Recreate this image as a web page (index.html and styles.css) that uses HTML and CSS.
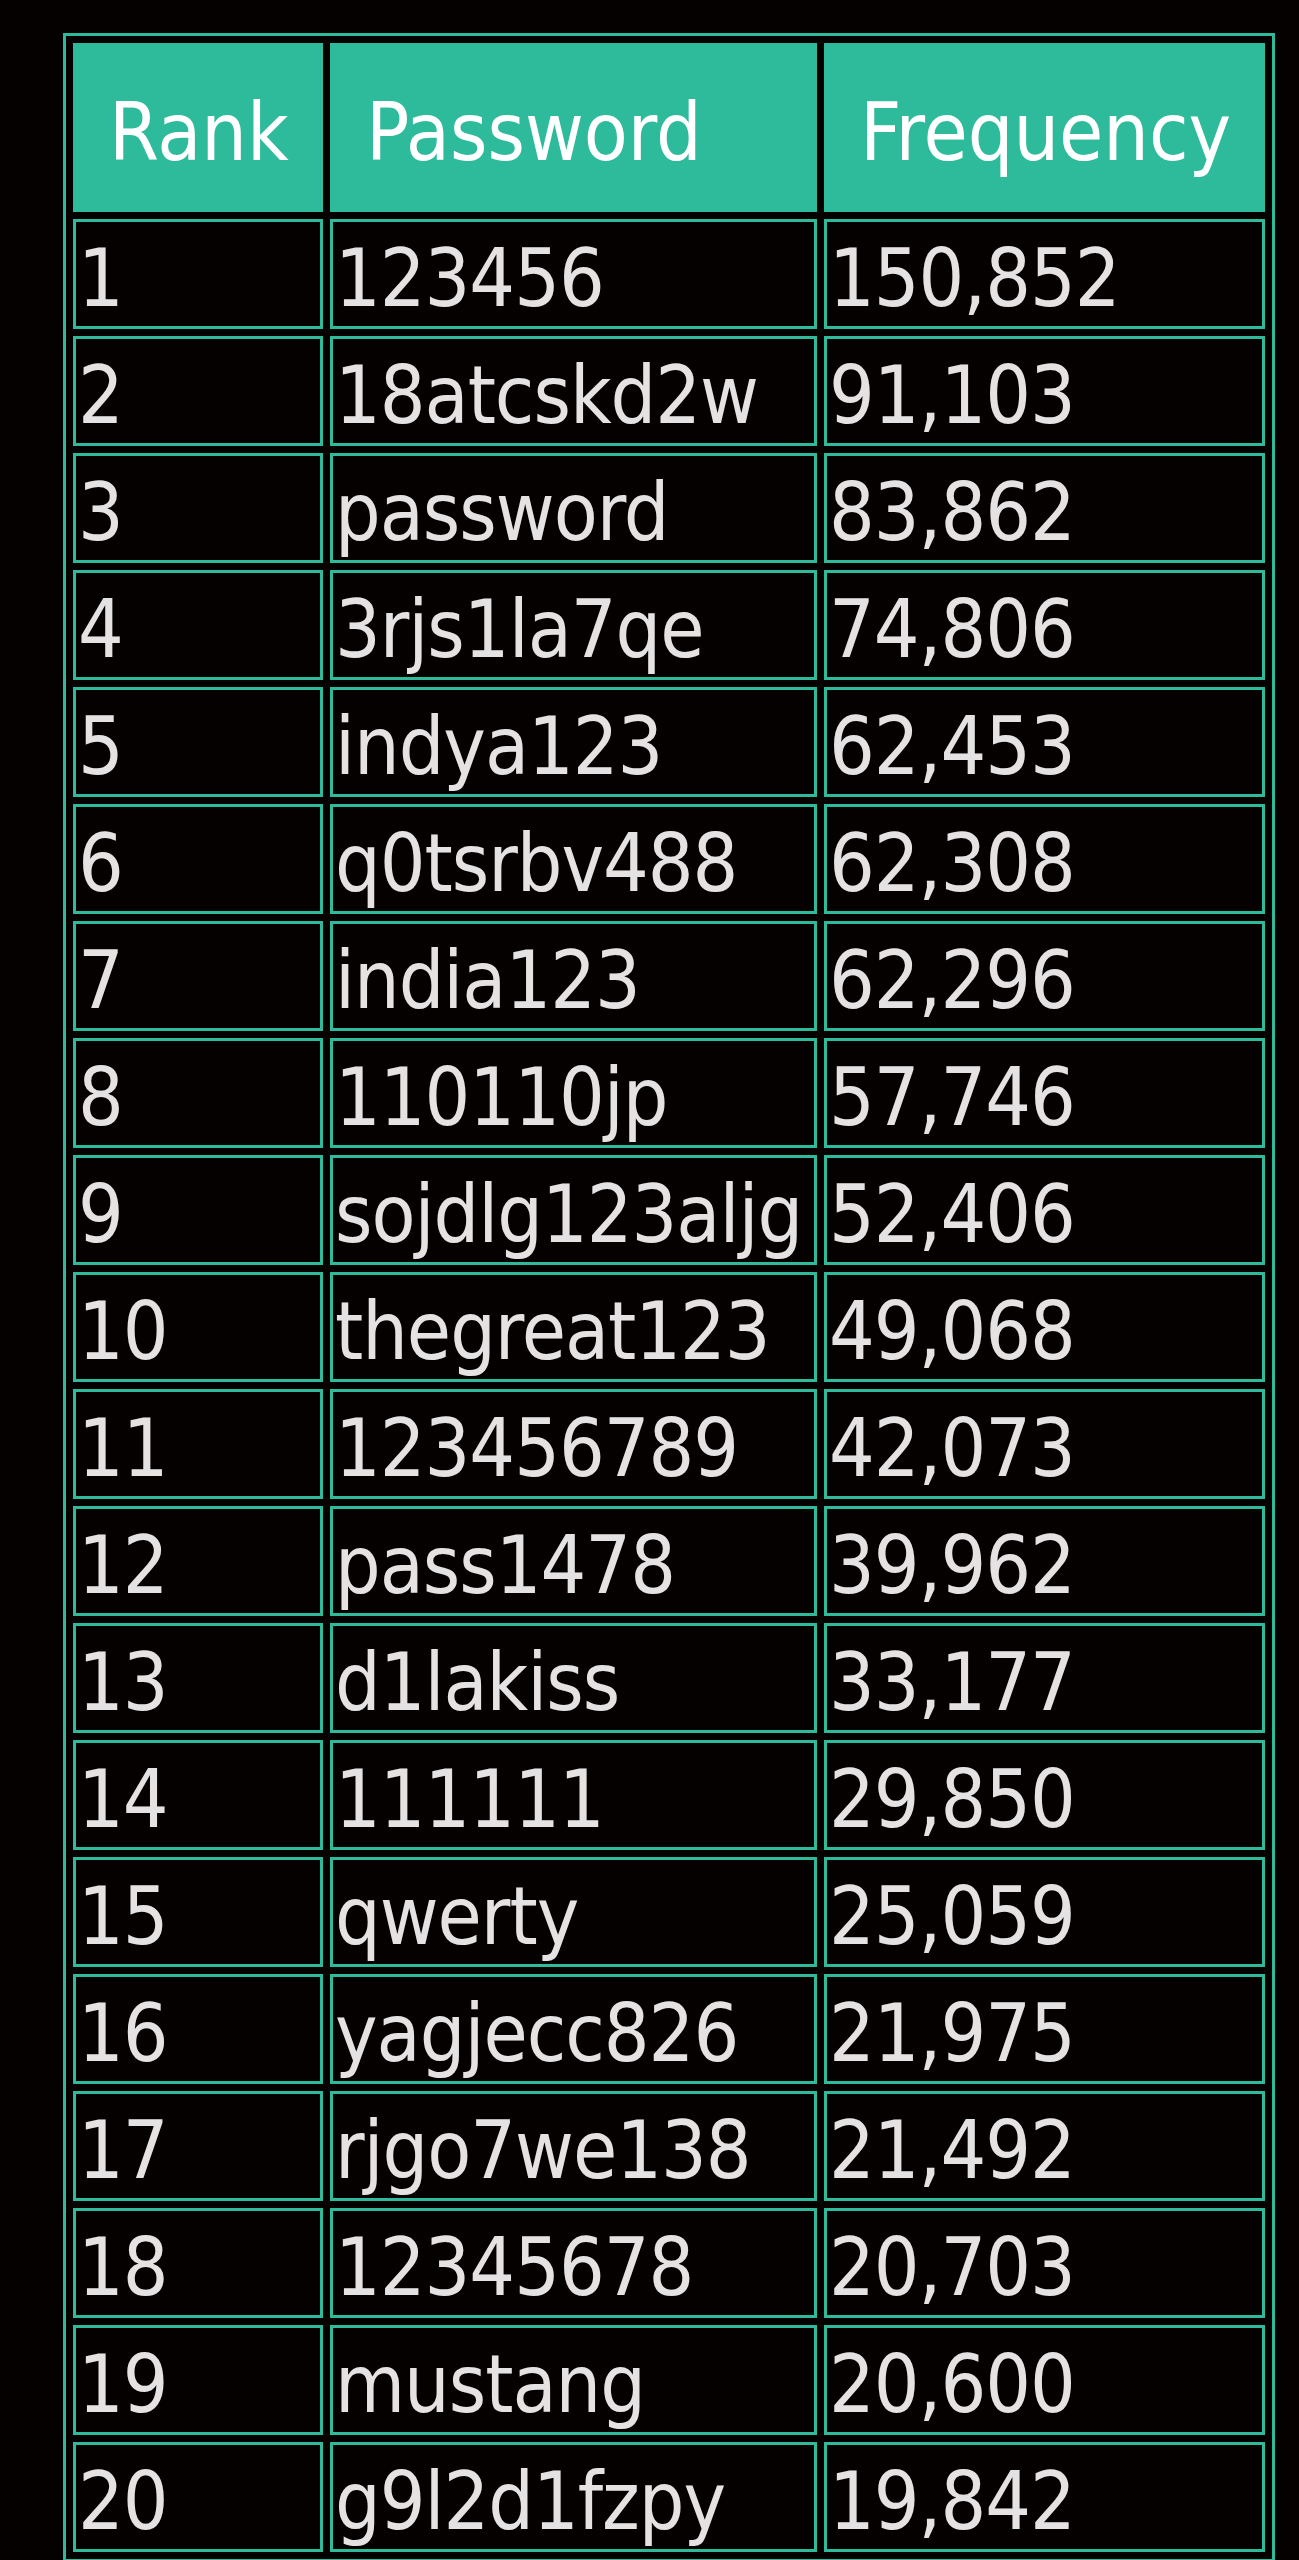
FILE: index.html
```html
<!DOCTYPE html>
<html lang="en">
<head>
    <meta charset="UTF-8">
    <meta name="viewport" content="width=device-width, initial-scale=1.0">
    <title>Most common passwords</title>
    <link rel="stylesheet" href="styles.css">
</head>
<body>
    <table class="pw-table">
        <thead>
            <tr>
                <th class="col-rank">Rank</th>
                <th class="col-pass">Password</th>
                <th class="col-freq">Frequency</th>
            </tr>
        </thead>
        <tbody>
            <tr><td>1</td><td>123456</td><td>150,852</td></tr>
            <tr><td>2</td><td>18atcskd2w</td><td>91,103</td></tr>
            <tr><td>3</td><td>password</td><td>83,862</td></tr>
            <tr><td>4</td><td>3rjs1la7qe</td><td>74,806</td></tr>
            <tr><td>5</td><td>indya123</td><td>62,453</td></tr>
            <tr><td>6</td><td>q0tsrbv488</td><td>62,308</td></tr>
            <tr><td>7</td><td>india123</td><td>62,296</td></tr>
            <tr><td>8</td><td>110110jp</td><td>57,746</td></tr>
            <tr><td>9</td><td>sojdlg123aljg</td><td>52,406</td></tr>
            <tr><td>10</td><td>thegreat123</td><td>49,068</td></tr>
            <tr><td>11</td><td>123456789</td><td>42,073</td></tr>
            <tr><td>12</td><td>pass1478</td><td>39,962</td></tr>
            <tr><td>13</td><td>d1lakiss</td><td>33,177</td></tr>
            <tr><td>14</td><td>111111</td><td>29,850</td></tr>
            <tr><td>15</td><td>qwerty</td><td>25,059</td></tr>
            <tr><td>16</td><td>yagjecc826</td><td>21,975</td></tr>
            <tr><td>17</td><td>rjgo7we138</td><td>21,492</td></tr>
            <tr><td>18</td><td>12345678</td><td>20,703</td></tr>
            <tr><td>19</td><td>mustang</td><td>20,600</td></tr>
            <tr><td>20</td><td>g9l2d1fzpy</td><td>19,842</td></tr>
        </tbody>
    </table>
</body>
</html>
```

FILE: styles.css
```css
body {
    margin: 0;
    padding: 33px 0 0 63px;
    background-color: #050101;
    font-family: "DejaVu Sans Condensed", "DejaVu Sans", sans-serif;
}

.pw-table {
    border: 3px solid #2dbb9b;
    border-spacing: 7px;
    font-size: 80px;
}

.pw-table th,
.pw-table td {
    box-sizing: border-box;
    border: 3px solid #2dbb9b;
    line-height: 95px;
    white-space: nowrap;
}

.pw-table th {
    background-color: #2dbb9b;
    color: #ffffff;
    font-weight: normal;
    text-align: left;
    padding: 39px 0 29px 33px;
}

.pw-table td {
    color: #e4e2e2;
    text-align: left;
    letter-spacing: -1px;
    padding: 9px 2px 0;
}

.col-rank {
    width: 250px;
}

.col-pass {
    width: 487px;
}

.col-freq {
    width: 441px;
}
```
